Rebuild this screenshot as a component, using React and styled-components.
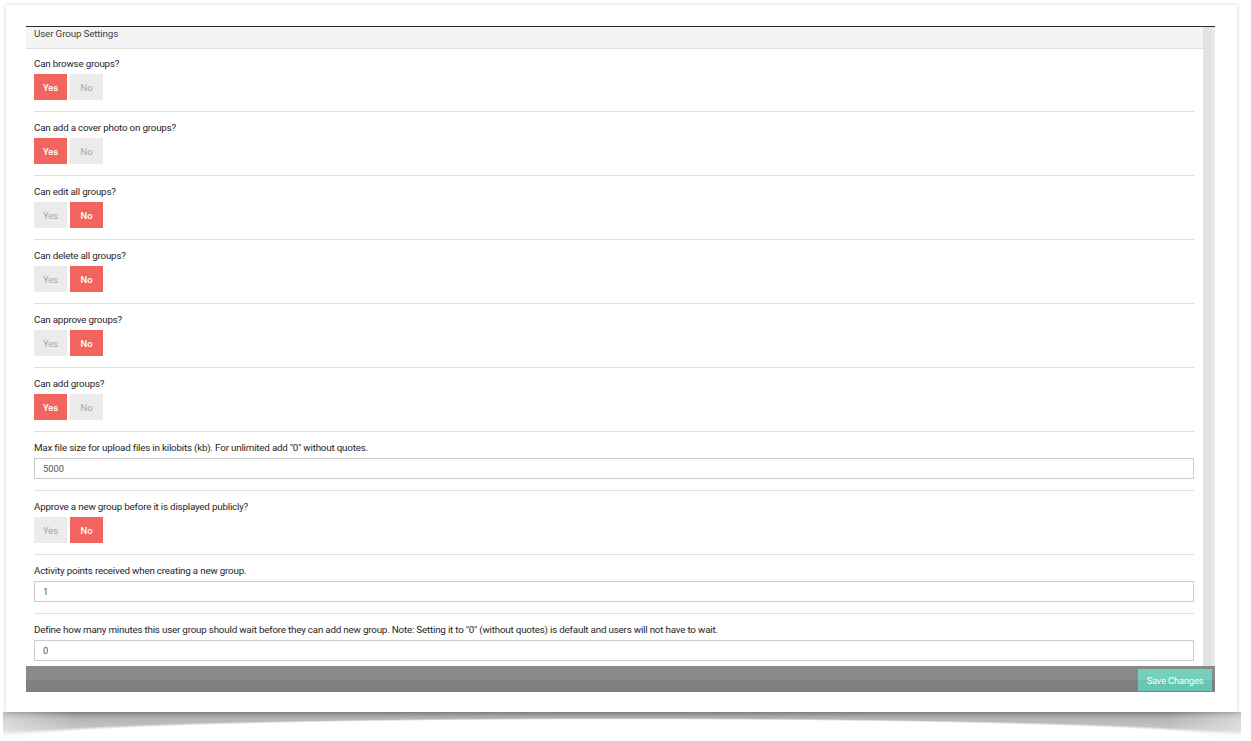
import React from "react";
import styled, { createGlobalStyle } from "styled-components";

const GlobalStyle = createGlobalStyle`
  html, body { margin: 0; padding: 0; background: #ffffff; }
  body { font-family: Roboto, "Liberation Sans", Arial, sans-serif; }
  * { box-sizing: border-box; }
`;

const Page = styled.div`
  width: 1251px;
  height: 741px;
  padding: 5px 0 0 6px;
  overflow: hidden;
  background: #fff;
`;

const Frame = styled.div`
  width: 1231px;
  height: 707px;
  background: #fff;
  box-shadow: 0 0 4px rgba(0, 0, 0, 0.2);
  padding: 21px 22px 0 20px;
  position: relative;
  z-index: 1;
`;

const Curl = styled.div`
  width: 1238px;
  height: 26px;
  margin-left: -3px;
  background:
    linear-gradient(to bottom, rgba(255,255,255,0) 70%, #fff 100%),
    radial-gradient(ellipse 640px 20px at 50% 100%, #fff 0 92%, rgba(255,255,255,0) 100%),
    linear-gradient(to right, rgba(255,255,255,0.45), rgba(255,255,255,0) 6%, rgba(255,255,255,0) 94%, rgba(255,255,255,0.45)),
    linear-gradient(to bottom, #8a8a8a, #b4b4b4 25%, #c8c8c8 70%, #dadada);
`;

const Panel = styled.div`
  width: 1189px;
  border-top: 1px solid #1f2933;
  display: flex;
  flex-direction: column;
`;

const Body = styled.div`
  height: 639px;
  display: flex;
  overflow: hidden;
`;

const Main = styled.div`
  width: 1177px;
  display: flex;
  flex-direction: column;
  background: #fff;
`;

const Track = styled.div`
  width: 12px;
  background: #e3e3e3;
  border-right: 3px solid #e9e9e9;
`;

const Header = styled.div`
  flex-shrink: 0;
  height: 22px;
  background: #f4f4f4;
  border-bottom: 1px solid #e0e0e0;
  padding: 0 8px;
  font-size: 9.8px;
  letter-spacing: -0.15px;
  line-height: 14px;
  color: #444;
`;

const Row = styled.div`
  margin: 0 9px 0 8px;
  padding: ${(p) => (p.$first ? "8px" : "9px")} 0 11px;
  border-bottom: 1px solid #e0e0e0;
  flex-shrink: 0;
`;

const Label = styled.div`
  font-size: 9.8px;
  letter-spacing: -0.2px;
  line-height: 14px;
  color: #262626;
  margin-bottom: 3px;
  white-space: nowrap;
`;

const Toggle = styled.div`
  display: flex;
  gap: 3px;
`;

const ToggleButton = styled.button`
  width: 33px;
  height: 26px;
  border: none;
  padding: 0;
  margin: 0;
  font-family: inherit;
  font-size: 9.5px;
  letter-spacing: -0.1px;
  font-weight: ${(p) => (p.$active ? 500 : 400)};
  color: ${(p) => (p.$active ? "#ffffff" : "#a6a6a6")};
  background: ${(p) => (p.$active ? "#f4645f" : "#ebebeb")};
  cursor: pointer;
`;

const TextInput = styled.input`
  display: block;
  width: 100%;
  height: 21px;
  border: 1px solid #cccccc;
  padding: 0 8px;
  font-family: inherit;
  font-size: 9.3px;
  color: #555555;
  background: #fff;
  outline: none;
`;

const Footer = styled.div`
  height: 26px;
  display: flex;
  justify-content: flex-end;
  align-items: flex-start;
  padding: 3px 3px 0 0;
  background: linear-gradient(to bottom, #8a8a8a 0 14px, #808080 14px);
`;

const SaveButton = styled.button`
  width: 74px;
  height: 22px;
  border: none;
  padding: 0;
  font-family: inherit;
  font-size: 9.3px;
  letter-spacing: -0.15px;
  color: #ffffff;
  background: linear-gradient(to bottom, #74d0bc 0 11px, #67c6b1 11px);
  cursor: pointer;
`;

const settings = [
  { type: "toggle", label: "Can browse groups?", value: true },
  { type: "toggle", label: "Can add a cover photo on groups?", value: true },
  { type: "toggle", label: "Can edit all groups?", value: false },
  { type: "toggle", label: "Can delete all groups?", value: false },
  { type: "toggle", label: "Can approve groups?", value: false },
  { type: "toggle", label: "Can add groups?", value: true },
  {
    type: "input",
    label: 'Max file size for upload files in kilobits (kb). For unlimited add "0" without quotes.',
    value: "5000",
  },
  { type: "toggle", label: "Approve a new group before it is displayed publicly?", value: false },
  { type: "input", label: "Activity points received when creating a new group.", value: "1" },
  {
    type: "input",
    label:
      'Define how many minutes this user group should wait before they can add new group. Note: Setting it to "0" (without quotes) is default and users will not have to wait.',
    value: "0",
  },
];

function Setting({ item, first }) {
  return (
    <Row $first={first}>
      <Label>{item.label}</Label>
      {item.type === "toggle" ? (
        <Toggle>
          <ToggleButton $active={item.value}>Yes</ToggleButton>
          <ToggleButton $active={!item.value}>No</ToggleButton>
        </Toggle>
      ) : (
        <TextInput defaultValue={item.value} />
      )}
    </Row>
  );
}

export default function App() {
  return (
    <>
      <GlobalStyle />
      <Page>
        <Frame>
          <Panel>
            <Body>
              <Main>
                <Header>User Group Settings</Header>
                {settings.map((s, i) => (
                  <Setting key={i} item={s} first={i === 0} />
                ))}
              </Main>
              <Track />
            </Body>
            <Footer>
              <SaveButton>Save Changes</SaveButton>
            </Footer>
          </Panel>
        </Frame>
        <Curl />
      </Page>
    </>
  );
}
